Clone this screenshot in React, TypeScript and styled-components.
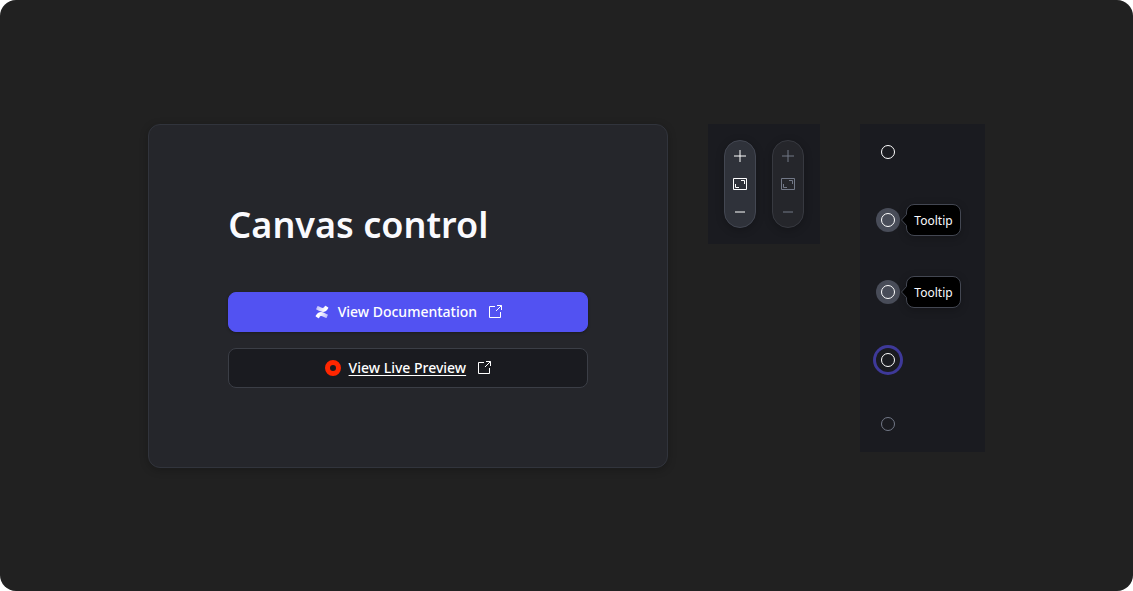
import React from "react";
import styled, { createGlobalStyle, css } from "styled-components";

const GlobalStyle = createGlobalStyle`
  *, *::before, *::after { box-sizing: border-box; }
  body {
    margin: 0;
    background: #ffffff;
    color: #fafafe;
    font-family: "Noto Sans", sans-serif;
  }
`;

const Page = styled.main`
  min-height: 100vh;
  padding: 124px 24px 80px;
  display: flex;
  flex-wrap: wrap;
  justify-content: center;
  align-items: flex-start;
  align-content: flex-start;
  gap: 40px;
  background: #212121;
  border-radius: 16px;
`;

const Card = styled.section`
  flex: 0 1 520px;
  padding: 79px;
  display: flex;
  flex-direction: column;
  gap: 46px;
  background: #25262b;
  border: 1px solid #31343c;
  border-radius: 12px;
  box-shadow: 0 2px 8px rgba(0, 0, 0, 0.24);
`;

const Title = styled.h1`
  margin: 0;
  font-size: 36px;
  line-height: 42px;
  font-weight: 600;
`;

const Links = styled.nav`
  display: flex;
  flex-direction: column;
  gap: 16px;
`;

const LinkButton = styled.a<{ $variant: "primary" | "secondary" }>`
  height: 40px;
  display: flex;
  align-items: center;
  justify-content: center;
  gap: 8px;
  border-radius: 8px;
  color: #ffffff;
  font-size: 14px;
  line-height: 20px;
  font-weight: 500;
  text-decoration: none;
  span { margin-right: 2px; }
  ${({ $variant }) =>
    $variant === "primary"
      ? css`
          background: #5252f2;
          border: 1px solid #5252f2;
          box-shadow: 0 1px 3px rgba(0, 0, 0, 0.3);
        `
      : css`
          background: #1a1b20;
          border: 1px solid #3b3e46;
          span {
            text-decoration: underline;
            text-decoration-thickness: 1px;
            text-underline-offset: 2px;
          }
        `}
`;

const Panel = styled.section`
  padding: 16px;
  display: flex;
  gap: 16px;
  background: #1a1b20;
`;

const ZoomPill = styled.div<{ $dimmed?: boolean }>`
  width: 32px;
  padding: 3px;
  display: flex;
  flex-direction: column;
  gap: 4px;
  border-radius: 16px;
  border: 1px solid ${({ $dimmed }) => ($dimmed ? "#373940" : "#434752")};
  background: ${({ $dimmed }) => ($dimmed ? "#25262b" : "#2f323a")};
  color: ${({ $dimmed }) => ($dimmed ? "#727887" : "#ffffff")};
  box-shadow: 0 2px 8px rgba(0, 0, 0, 0.24);
`;

const IconButton = styled.button`
  width: 24px;
  height: 24px;
  padding: 0;
  display: flex;
  align-items: center;
  justify-content: center;
  border: 0;
  background: transparent;
  color: inherit;
`;

const StatePanel = styled(Panel)`
  padding-right: 24px;
  flex-direction: column;
  gap: 40px;
`;

const StateRow = styled.div`
  display: flex;
  align-items: center;
  gap: 6px;
`;

type DotState = "default" | "active" | "focus" | "disabled";

const DotButton = styled(IconButton)<{ $state: DotState }>`
  border-radius: 50%;
  color: ${({ $state }) => ($state === "disabled" ? "#727887" : "#ffffff")};
  background: ${({ $state }) => ($state === "active" ? "#484c58" : "transparent")};
  box-shadow: ${({ $state }) => ($state === "focus" ? "0 0 0 3px #3e3999" : "none")};
`;

const Tooltip = styled.div`
  position: relative;
  height: 32px;
  padding: 2px 7px 0;
  display: flex;
  align-items: center;
  border: 1px solid #434752;
  border-radius: 8px;
  background: #000000;
  font-size: 12px;
  line-height: 16px;
  box-shadow: 0 2px 8px rgba(0, 0, 0, 0.24);
`;

const TooltipArrow = styled.svg`
  position: absolute;
  left: -6px;
  top: 9px;
`;

const Icon = ({ children }: { children: React.ReactNode }) => (
  <svg width="16" height="16" viewBox="0 0 16 16" fill="none" stroke="currentColor" aria-hidden="true">
    {children}
  </svg>
);

const PlusIcon = () => <Icon><path d="M8 2V14M2 8H14" /></Icon>;
const MinusIcon = () => <Icon><path d="M3 8H13" /></Icon>;
const FitIcon = () => (
  <Icon><path d="M1.5 2.5H14.5V13.5H1.5ZM9 4.5H12.5V8M3.5 8V11.5H7" /></Icon>
);
const CircleIcon = () => <Icon><circle cx="8" cy="8" r="6.5" /></Icon>;
const LaunchIcon = () => (
  <Icon><path d="M8 2.5H2.5V13.5H13.5V8M10 1.5H14.5V6M14.5 1.5L9 7" /></Icon>
);

const ConfluenceIcon = () => (
  <svg width="16" height="16" viewBox="-3 -3 30 30" aria-hidden="true">
    <defs>
      <linearGradient id="swoosh-low" x1="23" y1="24" x2="7" y2="15" gradientUnits="userSpaceOnUse">
        <stop offset="0.2" stopColor="#ffffff" stopOpacity="0.65" />
        <stop offset="1" stopColor="#ffffff" />
      </linearGradient>
      <linearGradient id="swoosh-high" x1="1" y1="0" x2="17" y2="9" gradientUnits="userSpaceOnUse">
        <stop offset="0.2" stopColor="#ffffff" stopOpacity="0.65" />
        <stop offset="1" stopColor="#ffffff" />
      </linearGradient>
    </defs>
    <path
      fill="url(#swoosh-low)"
      d="M.87 18.257c-.248.382-.53.875-.763 1.245a.764.764 0 0 0 .255 1.04l4.965 3.054a.764.764 0 0 0 1.058-.26c.199-.332.454-.763.733-1.221 1.967-3.247 3.945-2.853 7.508-1.146l4.957 2.337a.764.764 0 0 0 1.028-.382l2.364-5.346a.764.764 0 0 0-.382-1 599.851 599.851 0 0 1-4.965-2.361C10.911 10.97 5.224 11.185.87 18.257z"
    />
    <path
      fill="url(#swoosh-high)"
      d="M23.131 5.743c.249-.405.531-.875.764-1.25a.764.764 0 0 0-.256-1.034L18.675.404a.764.764 0 0 0-1.058.26c-.195.335-.451.763-.734 1.225-1.966 3.246-3.945 2.85-7.508 1.146L4.437.694a.764.764 0 0 0-1.027.382L1.046 6.422a.764.764 0 0 0 .382 1c1.039.49 3.105 1.467 4.965 2.361 6.698 3.246 12.392 3.029 16.738-4.04z"
    />
  </svg>
);

const RecordIcon = () => (
  <svg width="16" height="16" viewBox="0 0 16 16" aria-hidden="true">
    <circle cx="8" cy="8" r="5.5" fill="none" stroke="#ff2600" strokeWidth="5" />
  </svg>
);

const ZoomControl = ({ disabled = false }: { disabled?: boolean }) => (
  <ZoomPill $dimmed={disabled} role="group" aria-label="Canvas zoom">
    <IconButton type="button" aria-label="Zoom in" disabled={disabled}><PlusIcon /></IconButton>
    <IconButton type="button" aria-label="Fit to screen" disabled={disabled}><FitIcon /></IconButton>
    <IconButton type="button" aria-label="Zoom out" disabled={disabled}><MinusIcon /></IconButton>
  </ZoomPill>
);

const ControlState = ({ state, tooltipId }: { state: DotState; tooltipId?: string }) => (
  <StateRow>
    <DotButton
      type="button"
      $state={state}
      disabled={state === "disabled"}
      aria-label="Canvas control"
      aria-describedby={tooltipId}
    >
      <CircleIcon />
    </DotButton>
    {tooltipId && (
      <Tooltip id={tooltipId} role="tooltip">
        <TooltipArrow width="6" height="12" viewBox="0 0 6 12" aria-hidden="true">
          <path d="M6 0L0.5 6L6 12Z" fill="#000000" />
          <path d="M5.5 0.5L0.5 6L5.5 11.5" fill="none" stroke="#434752" />
        </TooltipArrow>
        Tooltip
      </Tooltip>
    )}
  </StateRow>
);

export default function App() {
  return (
    <>
      <GlobalStyle />
      <Page>
        <Card>
          <Title>Canvas control</Title>
          <Links aria-label="Resources">
            <LinkButton $variant="primary" href="#documentation">
              <ConfluenceIcon />
              <span>View Documentation</span>
              <LaunchIcon />
            </LinkButton>
            <LinkButton $variant="secondary" href="#preview">
              <RecordIcon />
              <span>View Live Preview</span>
              <LaunchIcon />
            </LinkButton>
          </Links>
        </Card>
        <Panel aria-label="Zoom controls">
          <ZoomControl />
          <ZoomControl disabled />
        </Panel>
        <StatePanel aria-label="Control states">
          <ControlState state="default" />
          <ControlState state="active" tooltipId="tooltip-hover" />
          <ControlState state="active" tooltipId="tooltip-pressed" />
          <ControlState state="focus" />
          <ControlState state="disabled" />
        </StatePanel>
      </Page>
    </>
  );
}
